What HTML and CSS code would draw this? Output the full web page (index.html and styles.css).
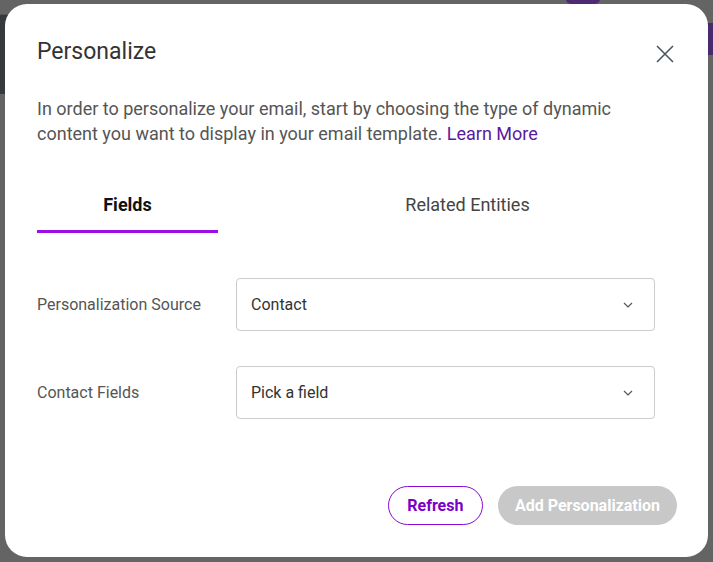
FILE: index.html
```html
<!DOCTYPE html>
<html lang="en">
<head>
    <meta charset="UTF-8">
    <meta name="viewport" content="width=device-width, initial-scale=1.0">
    <title>Personalize</title>
    <link rel="stylesheet" href="styles.css">
</head>
<body>
    <div class="backdrop">
        <div class="bg-sidebar"></div>
        <div class="bg-badge"></div>
        <div class="bg-tab"></div>
    </div>

    <div class="modal">
        <div class="modal-header">
            <h2 class="modal-title">Personalize</h2>
            <button class="close-btn" aria-label="Close">
                <svg width="20" height="20" viewBox="0 0 20 20">
                    <path d="M2 2 L18 18 M18 2 L2 18" stroke="#4a5560" stroke-width="1.6" fill="none"/>
                </svg>
            </button>
        </div>

        <p class="intro">
            In order to personalize your email, start by choosing the type of dynamic<br>
            content you want to display in your email template. <a href="#" class="learn-more">Learn More</a>
        </p>

        <div class="tabs">
            <div class="tab active">Fields</div>
            <div class="tab">Related Entities</div>
        </div>

        <div class="form">
            <div class="form-row">
                <label class="form-label">Personalization Source</label>
                <div class="select">
                    <span>Contact</span>
                    <svg width="10" height="6" viewBox="0 0 10 6">
                        <path d="M1 1 L5 5 L9 1" stroke="#555" stroke-width="1.2" fill="none"/>
                    </svg>
                </div>
            </div>
            <div class="form-row">
                <label class="form-label">Contact Fields</label>
                <div class="select">
                    <span>Pick a field</span>
                    <svg width="10" height="6" viewBox="0 0 10 6">
                        <path d="M1 1 L5 5 L9 1" stroke="#555" stroke-width="1.2" fill="none"/>
                    </svg>
                </div>
            </div>
        </div>

        <div class="modal-footer">
            <button class="btn btn-outline">Refresh</button>
            <button class="btn btn-disabled" disabled>Add Personalization</button>
        </div>
    </div>
</body>
</html>
```

FILE: styles.css
```css
body {
    margin: 0;
    height: 562px;
    overflow: hidden;
    background-color: #646464;
    font-family: Roboto, "Liberation Sans", sans-serif;
    color: #333;
}
.backdrop {
    position: fixed;
    inset: 0;
}
.bg-sidebar {
    position: absolute;
    left: 0;
    top: 14px;
    width: 10px;
    height: 79px;
    background-color: #35383d;
    border-top: 1px solid #555;
}
.bg-badge {
    position: absolute;
    left: 566px;
    top: -6px;
    width: 34px;
    height: 10px;
    background-color: #4e2a75;
    border-radius: 5px;
}
.bg-tab {
    position: absolute;
    right: 0;
    top: 23px;
    width: 10px;
    height: 32px;
    background-color: #4a2a6e;
}
.modal {
    position: relative;
    margin: 4px 0 0 5px;
    width: 703px;
    height: 553px;
    box-sizing: border-box;
    padding: 34px 31px 0 32px;
    background-color: #fff;
    border-radius: 22px;
}
.modal-header {
    display: flex;
    justify-content: space-between;
    align-items: flex-start;
    height: 28px;
}
.modal-title {
    margin: 0;
    font-size: 23px;
    line-height: 28px;
    font-weight: 400;
    color: #333;
}
.close-btn {
    background: none;
    border: none;
    padding: 0;
    margin-right: 2px;
    margin-top: 6px;
    cursor: pointer;
    display: flex;
}
.intro {
    margin: 30px 0 0;
    font-size: 18px;
    line-height: 25px;
    color: #555;
}
.learn-more {
    color: #5b1a9e;
    text-decoration: none;
}
.tabs {
    display: flex;
    gap: 159px;
    margin-top: 42px;
}
.tab {
    width: 181px;
    height: 45px;
    text-align: center;
    font-size: 18px;
    line-height: 26px;
    padding-top: 4px;
    color: #444;
    box-sizing: border-box;
    border-bottom: 3px solid transparent;
}
.tab.active {
    font-weight: 700;
    color: #111;
    border-bottom-color: #9b0fe6;
}
.form {
    display: flex;
    flex-direction: column;
    gap: 35px;
    margin-top: 45px;
}
.form-row {
    display: flex;
    align-items: center;
}
.form-label {
    width: 199px;
    font-size: 16px;
    color: #555;
}
.select {
    width: 419px;
    height: 53px;
    box-sizing: border-box;
    border: 1px solid #ccc;
    border-radius: 4px;
    padding: 0 21px 0 14px;
    display: flex;
    justify-content: space-between;
    align-items: center;
    font-size: 16px;
    color: #333;
}
.modal-footer {
    display: flex;
    justify-content: flex-end;
    gap: 15px;
    margin-top: 67px;
}
.btn {
    height: 39px;
    border-radius: 20px;
    font-family: Roboto, "Liberation Sans", sans-serif;
    font-size: 16px;
    font-weight: 700;
    cursor: pointer;
}
.btn-outline {
    background-color: #fff;
    color: #7a00c8;
    border: 1px solid #8a0ad0;
    padding: 0 18.5px;
}
.btn-disabled {
    background-color: #c8c8c8;
    color: #fff;
    border: none;
    padding: 0 17px;
    cursor: default;
}
```
